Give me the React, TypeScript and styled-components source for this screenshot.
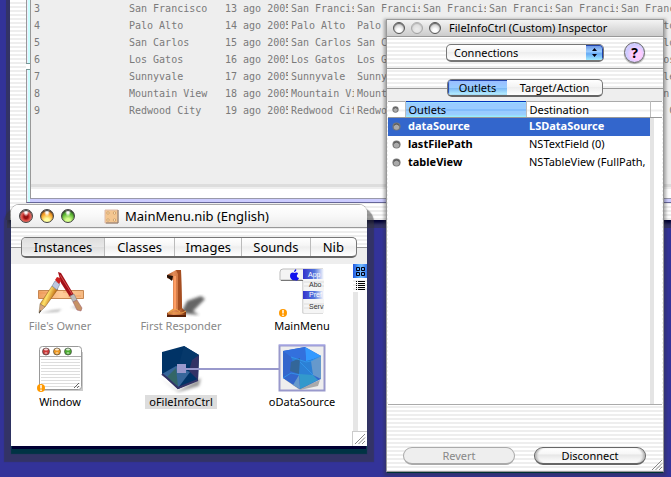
import React, { useState } from "react";
import styled, { createGlobalStyle, css } from "styled-components";

const GlobalStyle = createGlobalStyle`
  * { box-sizing: border-box; }
  html, body { margin: 0; background: #333399; overflow: hidden; }
  body, button, select { font-family: "Noto Sans", "Open Sans", sans-serif; }
  button, select { margin: 0; padding: 0; border: 0; background: none; color: #000; }
  table { border-collapse: collapse; border-spacing: 0; }
`;

const pinstripes = "repeating-linear-gradient(to bottom, #fff 0 2px, #eee 2px 4px)";

const Desktop = styled.main`
  position: relative;
  min-height: 100vh;
  overflow: hidden;
  background: #333399;
`;

/* ---------- Background document window ---------- */

const DocumentWindow = styled.section`
  position: absolute;
  top: 0;
  left: 10px;
  right: 0;
  padding: 0 0 17px 16px;
  background: ${pinstripes};
  box-shadow: -4px 0 0 #333366, 0 2px 3px 1px #000033, 0 5px 0 3px #333366;
`;

const DocumentPane = styled.div`
  position: relative;
  border-left: 1px solid #999;
  border-bottom: 1px solid #669;
  background: linear-gradient(to right, #eef 0 1px, #cff 1px 3px, #ccf 3px);
  padding: 0 0 3px 3px;

  &::before {
    content: "";
    position: absolute;
    left: -1px;
    top: 63px;
    width: 4px;
    height: 5px;
    border: 1px solid #799;
    border-width: 1px 0;
    background: #fff;
  }
`;

const DocumentBody = styled.div`
  min-height: 199px;
  border-left: 1px solid #999;
  border-bottom: 1px solid #99a;
  background: linear-gradient(to top, #fff 0 9px, #eee 9px 11px, #ddd 11px 14px, #eee 14px);
`;

const DocumentTable = styled.table`
  table-layout: fixed;
  width: 100%;
  font: 10px/17px "DejaVu Sans Mono", "Liberation Mono", monospace;
  color: #7a7a7a;

  td {
    padding: 0 3px 0 0;
    height: 17px;
  }
  td:first-child { padding-left: 3px; }
  td:last-child { padding-right: 0; }
`;

const ClippedText = styled.span`
  display: block;
  overflow: hidden;
  white-space: pre;
`;

const Col = styled.col<{ $w: number }>`
  width: ${(p) => p.$w}px;
`;

/* ---------- Shared window chrome ---------- */

const Panel = styled.section<{ $kind: "nib" | "inspector" }>`
  position: absolute;
  display: flex;
  flex-direction: column;
  ${(p) =>
    p.$kind === "nib"
      ? css`
          top: 205px;
          left: 11px;
          width: 356px;
          min-height: 241px;
          border-radius: 8px 8px 0 0;
          box-shadow: 0 -1px 0 #aaa, 0 4px 0 -1px #000033, 0 8px 1px 0 #003344, 0 9px 1px 7px rgba(51, 51, 51, 0.5);
        `
      : css`
          top: 20px;
          left: 387px;
          width: 276px;
          min-height: 451px;
          box-shadow: 0 0 0 1px #999, 0 2px 0 0 #003333, 0 2px 3px 3px rgba(51, 51, 51, 0.4);
        `}
  background: ${pinstripes};
`;

const NibTitleBar = styled.header`
  display: flex;
  align-items: center;
  height: 23px;
  padding: 0 8px;
  border-bottom: 1px solid #999;
  border-radius: 8px 8px 0 0;
  background: linear-gradient(#fff, #f8f8f8 50%, #ebebeb);
`;

const InspectorTitleBar = styled.header`
  display: flex;
  align-items: center;
  height: 17px;
  padding: 0 6px;
  border-bottom: 1px solid #999;
  background: linear-gradient(#f4f4f4, #ddd 55%, #ccc);
`;

const TrafficLights = styled.div<{ $gap: number }>`
  display: flex;
  gap: ${(p) => p.$gap}px;
`;

const Light = styled.button<{ $tone: "red" | "amber" | "green" }>`
  width: 14px;
  height: 14px;
  border: 1px solid #444;
  border-radius: 50%;
  background: ${(p) =>
    ({
      red: "radial-gradient(ellipse at 50% 10%, #fff 0 14%, transparent 36%), radial-gradient(circle at 50% 55%, #931010 0 22%, #d8453d 42%, #f6a69b 80%)",
      amber: "radial-gradient(ellipse at 50% 10%, #fff 0 14%, transparent 36%), radial-gradient(circle at 50% 90%, #ffffa0 0 18%, #f9a62c 55%, #c45d10 90%)",
      green: "radial-gradient(ellipse at 50% 10%, #fff 0 14%, transparent 36%), radial-gradient(circle at 50% 90%, #d6ff8e 0 18%, #62bc38 55%, #266d17 90%)",
    })[p.$tone]};
  box-shadow: inset 0 1px 1px #333;
`;

const SmallLight = styled.button<{ $dim?: boolean }>`
  width: 12px;
  height: 12px;
  border: 1px solid #555;
  border-radius: 50%;
  background: radial-gradient(circle at 50% 75%, #fff 0 20%, #d6d6d6 60%, #aaa);
  box-shadow: inset 0 1px 1px #666;
  opacity: ${(p) => (p.$dim ? 0.4 : 1)};
`;

const NibTitle = styled.h1`
  display: flex;
  align-items: center;
  gap: 6px;
  margin: 0 0 0 29px;
  font-size: 13px;
  font-weight: 400;
  line-height: 20px;
  white-space: nowrap;
`;

const InspectorTitle = styled.h1`
  margin: 0 0 0 8px;
  font-size: 11px;
  font-weight: 400;
  line-height: 16px;
  white-space: nowrap;
`;

/* ---------- Nib window ---------- */

const NibTabRow = styled.div`
  padding: 9px 10px 6px;
  background: linear-gradient(to bottom, transparent 0 19px, #999 19px 20px, #eee 20px);
`;

const NibTabs = styled.div`
  display: flex;
  height: 21px;
  border: 1px solid #777;
  border-bottom: 2px solid #666;
  border-radius: 5px;
  overflow: hidden;
  background: linear-gradient(#fff, #f6f6f6 40%, #eee 50%, #fff);
`;

const NibTab = styled.button<{ $grow: number; $active: boolean }>`
  flex: ${(p) => p.$grow} 1 0;
  font-size: 13px;
  line-height: 18px;
  background: ${(p) => (p.$active ? "linear-gradient(#ddd, #e8e8e8 50%, #ddd 52%, #f4f4f4)" : "transparent")};
  & + & { border-left: 1px solid #bbb; }
`;

const NibContent = styled.div`
  display: flex;
  flex: 1;
  background: #fff;
`;

const IconGrid = styled.div`
  display: grid;
  flex: 1;
  grid-template-columns: repeat(3, 98px);
  grid-auto-rows: 76px;
  column-gap: 23px;
`;

const IconCell = styled.figure`
  position: relative;
  display: flex;
  flex-direction: column;
  align-items: center;
  margin: 0;
  padding-top: 4px;

  svg { display: block; overflow: visible; }
`;

const IconLabel = styled.figcaption<{ $muted?: boolean; $selected?: boolean }>`
  margin-top: 1px;
  padding: 0 4px;
  font-size: 11px;
  line-height: 14px;
  white-space: nowrap;
  color: ${(p) => (p.$muted ? "#888" : "#000")};
  background: ${(p) => (p.$selected ? "#ddd" : "transparent")};
`;

const ConnectionLine = styled.span`
  position: absolute;
  z-index: 1;
  top: 28px;
  left: 49px;
  width: 98px;
  height: 2px;
  background: #9999cc;

  &::before {
    content: "";
    position: absolute;
    left: -4px;
    top: -4px;
    width: 9px;
    height: 9px;
    background: #9999cc;
  }
`;

const NibSide = styled.div`
  display: flex;
  flex-direction: column;
  width: 14px;
  background: linear-gradient(to right, #e6e6e6 0 5px, #fff 5px);
`;

const ViewButton = styled.button<{ $active: boolean }>`
  display: block;
  width: 14px;
  height: 14px;
  background: ${(p) => (p.$active ? "linear-gradient(to right, #2255dd, #55aaff 40%, #77bbff 60%, #3377ee)" : pinstripes)};
  svg { display: block; }
`;

const NibCorner = styled.div`
  width: 15px;
  height: 15px;
  margin: auto 0 0 -1px;
  border: 1px solid #ccc;
  border-width: 1px 0 0 1px;
  background: #fff;
  svg { display: block; }
`;

/* ---------- Inspector ---------- */

const InspectorToolbar = styled.div`
  display: flex;
  align-items: center;
  gap: 20px;
  height: 32px;
  padding: 0 18px 0 59px;
  border-bottom: 1px solid #999;
`;

const PopUp = styled.label`
  position: relative;
  display: flex;
  flex: 1;
  height: 18px;
  border: 1px solid #777;
  border-bottom-width: 2px;
  border-radius: 5px;
  overflow: hidden;
  background: linear-gradient(#fff, #f4f4f4 45%, #eee 50%, #fff);

  select {
    flex: 1;
    padding-left: 7px;
    appearance: none;
    font-size: 11px;
    line-height: 15px;
  }
  svg {
    position: absolute;
    top: 0;
    right: 0;
    pointer-events: none;
  }
`;

const HelpButton = styled.button`
  width: 21px;
  height: 21px;
  border: 1px solid #666;
  border-radius: 50%;
  font-size: 14px;
  font-weight: 700;
  line-height: 18px;
  background: radial-gradient(circle at 60% 60%, #ffccff 0 30%, #ccccff 60%, #e6ccff);
  box-shadow: 0 1px 1px #999;
`;

const InspectorTabRow = styled.div`
  display: flex;
  justify-content: center;
  padding: 10px 0 4px;
  background: linear-gradient(to bottom, transparent 0 19px, #999 19px 20px, #eee 20px);
`;

const InspectorTabs = styled.div`
  display: flex;
  width: 156px;
  height: 18px;
  border: 1px solid #777;
  border-bottom: 2px solid #666;
  border-radius: 5px;
  overflow: hidden;
  background: linear-gradient(#fff, #f4f4f4 45%, #eee 50%, #fff);
`;

const InspectorTab = styled.button<{ $grow: number; $active: boolean }>`
  flex: ${(p) => p.$grow} 1 0;
  font-size: 11px;
  line-height: 15px;
  ${(p) =>
    p.$active &&
    css`
      background: linear-gradient(#99bbff, #99ccff 50%, #77b4f4 52%, #bbf4ff);
      box-shadow: inset 0 1px 0 #2244aa, inset 1px 0 1px #2244aa;
    `}
`;

const TableFrame = styled.div`
  display: flex;
  flex-direction: column;
  flex: 1;
  margin: 0 1px;
  border-bottom: 1px solid #aaa;
  background: linear-gradient(to left, #fff 0 8px, #e4e4e4 8px 12px, #fff 12px);
`;

const OutletTable = styled.table`
  width: 100%;
  table-layout: fixed;
  font-size: 11px;

  th, td {
    padding: 0 0 0 3px;
    text-align: left;
    white-space: nowrap;
  }
  th {
    height: 16px;
    font-weight: 400;
    line-height: 13px;
    border-bottom: 1px solid #999;
    border-top: 1px solid #aaa;
    border-right: 1px solid #bbb;
    background: linear-gradient(#fff 0 7px, #eee 7px 9px, #fff 9px);
  }
  th:last-child { border-right: 0; }
  td:first-child, th:first-child { padding-left: 4px; }
  td { height: 18px; padding-bottom: 2px; line-height: 16px; }
  td:nth-child(2) { font-weight: 700; }
  td svg, th svg { display: block; }
`;

const SortedHeader = styled.th`
  && {
    border-top-color: #0033bb;
    background: linear-gradient(#99ccff 0 7px, #6aaef6 7px 8px, #99ccff 8px 12px, #99ffff);
  }
`;

const OutletRow = styled.tr<{ $selected: boolean }>`
  ${(p) =>
    p.$selected &&
    css`
      color: #fff;
      td:not(:last-child) { background: #3366cc; }
      td:nth-child(3) { font-weight: 700; }
    `}
`;

const InspectorFooter = styled.footer`
  position: relative;
  display: flex;
  gap: 19px;
  padding: 42px 17px 6px 16px;
`;

const PillButton = styled.button`
  flex: 1;
  height: 18px;
  border: 1px solid #666;
  border-bottom-width: 2px;
  border-radius: 9px;
  font-size: 11px;
  line-height: 15px;
  background: linear-gradient(#fff, #f6f6f6 40%, #e6e6e6 46%, #fff);
  box-shadow: inset 3px 0 2px -1px #bbb, inset -3px 0 2px -1px #bbb;
  &:disabled {
    color: #888;
    border-color: #aaa;
    background: #eee;
    box-shadow: none;
  }
`;

const FooterGrip = styled.span`
  position: absolute;
  right: 0;
  bottom: 0;
  svg { display: block; }
`;

/* ---------- Drawings ---------- */

const Grip = () => (
  <svg width="13" height="13" viewBox="0 0 13 13" stroke="#888" strokeWidth="1" aria-hidden="true">
    <path d="M2 12 12 2M5.500 12 12 5.500M9 12 12 9" />
  </svg>
);

const NibFileIcon = () => (
  <svg width="15" height="15" viewBox="0 0 15 15" aria-hidden="true">
    <path d="M1 1h13v13H1z" fill="#f4c690" stroke="#dba" />
    <path d="M14 1v13H2" fill="none" stroke="#876" />
    <g fill="#fff0c8" stroke="#c8935f" strokeWidth=".8">
      <circle cx="4" cy="4" r="1.200" /><circle cx="10.500" cy="4" r="1.200" />
      <circle cx="4" cy="11" r="1.200" /><circle cx="10.500" cy="11" r="1.200" />
    </g>
  </svg>
);

const Warning = ({ x, y }: { x: number; y: number }) => (
  <g>
    <circle cx={x} cy={y} r="4" fill="#ff9900" />
    <path d={`M${x} ${y - 3}v3.500M${x} ${y + 1.5}v1.500`} stroke="#fff" strokeWidth="1.500" />
  </g>
);

const OwnerIcon = () => (
  <svg width="48" height="50" viewBox="0 0 48 50" aria-hidden="true">
    <defs>
      <linearGradient id="wood" x1="0" x2="1"><stop offset="0" stopColor="#f0a060" /><stop offset=".5" stopColor="#ffcc99" /><stop offset="1" stopColor="#f5b880" /></linearGradient>
      <linearGradient id="pencil" x1="0" y1="0" x2="1" y2=".5"><stop offset=".25" stopColor="#c98318" /><stop offset=".5" stopColor="#ffe26b" /><stop offset=".8" stopColor="#c6761a" /></linearGradient>
      <filter id="soft"><feGaussianBlur stdDeviation="1" /></filter>
    </defs>
    <path d="M5 45 16 42 26 41 22 44zM34 39l10-1-2 3z" fill="#999" opacity=".6" filter="url(#soft)" />
    <path d="M2.500 22.500h45v8h-45z" fill="url(#wood)" stroke="#c68752" />
    <path d="M3 25h12M27 24h9M32 28h13" stroke="#ea8e4e" opacity=".6" />
    <path d="m22 4 3 1 13 22-4 2-9-14z" fill="#a31018" />
    <path d="m24 7 12 19" stroke="#d25050" />
    <path d="m34 28 4-2 3 6-4 2z" fill="#bbb" stroke="#777" strokeWidth=".5" />
    <path d="m37 34 4-2 5 8-1 3-4-1z" fill="#c69366" stroke="#956" strokeWidth=".5" />
    <path d="m16 18 6 3L9 39l-5-3z" fill="url(#pencil)" stroke="#875018" strokeWidth=".5" />
    <path d="m4 36 5 3-6 6z" fill="#d8a57c" stroke="#875" strokeWidth=".5" />
    <path d="m4 42 1 1-2 3z" fill="#222" />
    <path d="m16 18 3-5 5 3-3 6z" fill="#bcc7df" stroke="#678" strokeWidth=".5" />
    <path d="m19 12 2-3 3 1 1 3-2 3z" fill="#cc2020" />
  </svg>
);

const ResponderIcon = () => (
  <svg width="48" height="50" viewBox="0 0 48 50" aria-hidden="true">
    <defs>
      <linearGradient id="bronze" x1="0" x2="1"><stop offset="0" stopColor="#8e4119" /><stop offset=".35" stopColor="#e38c58" /><stop offset=".65" stopColor="#ca713e" /><stop offset="1" stopColor="#712e0c" /></linearGradient>
      <filter id="blur"><feGaussianBlur stdDeviation="1.500" /></filter>
    </defs>
    <path d="M24 45 30 33 44 28 48 31 36 43 42 47z" fill="#333" opacity=".75" filter="url(#blur)" />
    <path d="M10 7 19 2h5l1 38 4 4v4H10v-3l6-4V12L10 10z" fill="url(#bronze)" />
    <path d="m10 7 6 1-1 5-5-4z" fill="#221108" />
    <path d="m19 2 5 0 1 38-4 3V6z" fill="#a54e21" />
    <path d="M18 8v34" stroke="#ff9e64" strokeWidth="2" />
    <path d="M16 41 11 45h14l4-2M13 44l6-3 4 3" stroke="#efa34d" fill="none" />
    <path d="M10 47h19v2H10z" fill="#572007" />
  </svg>
);

const MenuIcon = () => (
  <svg width="48" height="50" viewBox="0 0 48 50" aria-hidden="true">
    <defs>
      <linearGradient id="fade" x1="0" x2="1"><stop offset="0" stopColor="#3333cc" /><stop offset=".55" stopColor="#5577dd" /><stop offset="1" stopColor="#fff" /></linearGradient>
    </defs>
    <path d="M5 1.500h40v10H25V46H24V13H5Q2 12 2 8V4Q2 2 5 1.500" fill="#f4f4f4" />
    <path d="M45 1H5Q2 1 2 4v8h22M25 12v33h20" fill="none" stroke="#bbb" />
    <path d="M3 12.500h22" stroke="#777" />
    <path d="M25.500 11.500H46V45H25.500z" fill="#f5f5f5" />
    <path d="M26 14h20M26 18h20M26 36h20M26 40h20" stroke="#ddd" />
    <path d="M25 1h21v10H25zM25 23h21v8H25z" fill="url(#fade)" />
    <path d="M16 4c0-2 2-3 2-3 1 2-1 3-2 3m1 1c2-1 3 0 3 1-2 1-1 4 1 4-1 3-3 3-4 2-2 1-5-1-5-4 0-4 3-4 5-3" fill="#1111ee" />
    <g fontFamily="Liberation Sans, sans-serif" fontSize="7">
      <text x="30" y="9" fill="#fff">App</text>
      <text x="31" y="19" fill="#333">Abo</text>
      <text x="31" y="29" fill="#fff">Pref</text>
      <text x="31" y="41" fill="#333">Serv</text>
    </g>
    <Warning x={5} y={45} />
  </svg>
);

const lights: [string, number][] = [["#cc3838", 10], ["#ee9922", 21], ["#4aac2e", 32]];

const WindowIcon = () => (
  <svg width="48" height="50" viewBox="0 0 48 50" aria-hidden="true">
    <path d="M5 46h41V8" fill="none" stroke="#ccc" strokeWidth="2" />
    <rect x="3.500" y="2.500" width="42" height="43" rx="3" fill="#fff" stroke="#999" />
    <path d="M4 12.500h41" stroke="#aaa" />
    <path d="M5 15.500h39M5 18.500h39M5 21.500h39M5 24.500h39M5 27.500h39M5 30.500h39M5 33.500h39M5 36.500h39M5 39.500h39M5 42.500h39" stroke="#ddd" />
    {lights.map(([color, x]) => (
      <g key={color}>
        <circle cx={x} cy="7.500" r="3.500" fill={color} stroke="#444" strokeWidth=".7" />
        <ellipse cx={x} cy="5.500" rx="2" ry="1" fill="#fff" opacity=".8" />
        <ellipse cx={x} cy="9" rx="1.500" ry="1" fill="#fff" opacity=".45" />
      </g>
    ))}
    <path d="m38 44 5-5M41 44l2-2" stroke="#666" />
    <Warning x={5} y={44} />
  </svg>
);

const DarkCube = () => (
  <svg width="48" height="50" viewBox="0 0 48 50" aria-hidden="true">
    <defs><filter id="cubeShadow"><feGaussianBlur stdDeviation="1.500" /></filter></defs>
    <path d="m3 34 18 13 23-13-2 8-21 6z" fill="#999" filter="url(#cubeShadow)" />
    <path d="M5 8 27 2l15 9-1 25-20 9L5 30z" fill="#003366" />
    <path d="m27 2 15 9-8 9-13 4z" fill="#06386a" />
    <path d="m35 16 7-5-1 25-9-9z" fill="#333366" />
    <path d="M5 30 19 22l14 6-12 16z" fill="#36669a" />
    <path d="m10 33 9-9 2 19z" fill="#336666" />
    <path d="m5 30 5 4 11 10 20-8" fill="none" stroke="#333366" strokeWidth="2" />
  </svg>
);

const BlueCube = () => (
  <svg width="48" height="50" viewBox="0 0 48 50" aria-hidden="true">
    <path d="M1.500 1.500h45v45h-45z" fill="#eee" stroke="#9999cc" strokeWidth="2" />
    <path d="M1 1h46" stroke="#aaaaee" />
    <path d="m6 35 16 9 20-8-2 6-18 4z" fill="#aaa" />
    <path d="M5 7 27 3l16 9v23l-21 10L5 34z" fill="#3366cc" />
    <path d="m27 3 16 9-15 6z" fill="#3399ff" />
    <path d="M5 7 27 3l1 15-15-5z" fill="#3370dd" />
    <path d="m13 13 15 4 12-3-6 18-13 1z" fill="#2c80d5" />
    <path d="m13 18 9-4-1 16-9-3z" fill="#336699" />
    <path d="m33 17 10-5v23l-8-4z" fill="#6699cc" />
    <path d="m21 30 14 1 5 5-18 9z" fill="#3399cc" />
    <path d="m5 34 8-5 8 2 1 14z" fill="#3366cc" />
    <path d="m15 41 6-10 1 14z" fill="#6699cc" />
    <path d="m13 13 15 5 5-1 10-5M22 18l13 13M5 34l8-5 9 2" fill="none" stroke="#3399ee" strokeWidth=".8" />
  </svg>
);

const Dot = ({ size }: { size: number }) => (
  <svg width={size} height={size} viewBox="0 0 10 10" aria-hidden="true">
    <circle cx="5" cy="5" r="4.500" fill="#777" />
    <circle cx="5" cy="5.500" r="3" fill="#aaa" />
    <path d="M2 4Q5 .5 8 4" stroke="#444" fill="none" />
  </svg>
);

const PopUpArrows = () => (
  <svg width="17" height="16" viewBox="0 0 17 16" aria-hidden="true">
    <defs><linearGradient id="aqua" x1="0" x2="0" y1="0" y2="1"><stop offset="0" stopColor="#668ee0" /><stop offset=".4" stopColor="#99ccff" /><stop offset=".55" stopColor="#66aaf4" /><stop offset="1" stopColor="#aaf4ff" /></linearGradient></defs>
    <path d="M0 0h17v16H0z" fill="url(#aqua)" />
    <path d="M0 .5h14q2.500 0 2.500 3V15" fill="none" stroke="#2244aa" />
    <path d="m8.500 3 2.500 3h-5zM8.500 12l2.500-3h-5z" fill="#001" />
  </svg>
);

const GridGlyph = () => (
  <svg width="14" height="14" viewBox="0 0 14 14" fill="none" stroke="#001" aria-hidden="true">
    <path d="M3.500 3.500h3v3h-3zM8.500 3.500h3v3h-3zM3.500 8.500h3v3h-3zM8.500 8.500h3v3h-3z" />
  </svg>
);

const ListGlyph = () => (
  <svg width="14" height="14" viewBox="0 0 14 14" stroke="#000" aria-hidden="true">
    <path d="M3 3.500h1M3 5.500h1M3 7.500h1M3 9.500h1M3 11.500h1M5 3.500h7M5 5.500h7M5 7.500h7M5 9.500h7M5 11.500h7" />
  </svg>
);

/* ---------- Data ---------- */

const records = [
  [3, "San Francisco", "13 ago 2005"],
  [4, "Palo Alto", "14 ago 2005"],
  [5, "San Carlos", "15 ago 2005"],
  [6, "Los Gatos", "16 ago 2005"],
  [7, "Sunnyvale", "17 ago 2005"],
  [8, "Mountain View", "18 ago 2005"],
  [9, "Redwood City", "19 ago 2005"],
] as const;

const cityColumns = [0, 1, 2, 3, 4, 5];

const nibTabs: [string, number][] = [["Instances", 83], ["Classes", 70], ["Images", 67], ["Sounds", 68], ["Nib", 46]];

const inspectorTabs: [string, number][] = [["Outlets", 59], ["Target/Action", 95]];

const outlets = [
  ["dataSource", "LSDataSource"],
  ["lastFilePath", "NSTextField (0)"],
  ["tableView", "NSTableView (FullPath,"],
];

export default function App() {
  const [nibTab, setNibTab] = useState("Instances");
  const [inspectorTab, setInspectorTab] = useState("Outlets");
  const [view, setView] = useState("icons");
  const [selected, setSelected] = useState("dataSource");

  return (
    <Desktop>
      <GlobalStyle />
      <DocumentWindow aria-label="Files">
        <DocumentPane>
          <DocumentBody>
            <DocumentTable>
              <colgroup>
                <Col $w={98} /><Col $w={96} /><Col $w={66} />
                {cityColumns.slice(1).map((i) => <Col key={i} $w={66} />)}
                <col />
              </colgroup>
              <tbody>
                {records.map(([id, city, date]) => (
                  <tr key={id}>
                    <td>{id}</td>
                    <td><ClippedText>{city}</ClippedText></td>
                    <td><ClippedText>{date}</ClippedText></td>
                    {cityColumns.map((i) => <td key={i}><ClippedText>{city}</ClippedText></td>)}
                  </tr>
                ))}
              </tbody>
            </DocumentTable>
          </DocumentBody>
        </DocumentPane>
      </DocumentWindow>

      <Panel $kind="nib" aria-label="MainMenu.nib">
        <NibTitleBar>
          <TrafficLights $gap={7}>
            <Light $tone="red" aria-label="Close" />
            <Light $tone="amber" aria-label="Minimize" />
            <Light $tone="green" aria-label="Zoom" />
          </TrafficLights>
          <NibTitle><NibFileIcon />MainMenu.nib (English)</NibTitle>
        </NibTitleBar>
        <NibTabRow>
          <NibTabs role="tablist">
            {nibTabs.map(([name, grow]) => (
              <NibTab key={name} role="tab" aria-selected={nibTab === name} $grow={grow} $active={nibTab === name} onClick={() => setNibTab(name)}>
                {name}
              </NibTab>
            ))}
          </NibTabs>
        </NibTabRow>
        <NibContent>
          <IconGrid>
            <IconCell><OwnerIcon /><IconLabel $muted>File's Owner</IconLabel></IconCell>
            <IconCell><ResponderIcon /><IconLabel $muted>First Responder</IconLabel></IconCell>
            <IconCell><MenuIcon /><IconLabel>MainMenu</IconLabel></IconCell>
            <IconCell><WindowIcon /><IconLabel>Window</IconLabel></IconCell>
            <IconCell><DarkCube /><ConnectionLine /><IconLabel $selected>oFileInfoCtrl</IconLabel></IconCell>
            <IconCell><BlueCube /><IconLabel>oDataSource</IconLabel></IconCell>
          </IconGrid>
          <NibSide>
            <ViewButton $active={view === "icons"} aria-label="Icon view" onClick={() => setView("icons")}><GridGlyph /></ViewButton>
            <ViewButton $active={view === "list"} aria-label="List view" onClick={() => setView("list")}><ListGlyph /></ViewButton>
            <NibCorner><Grip /></NibCorner>
          </NibSide>
        </NibContent>
      </Panel>

      <Panel $kind="inspector" aria-label="Inspector">
        <InspectorTitleBar>
          <TrafficLights $gap={6}>
            <SmallLight aria-label="Close" />
            <SmallLight $dim aria-label="Minimize" />
            <SmallLight aria-label="Zoom" />
          </TrafficLights>
          <InspectorTitle>FileInfoCtrl (Custom) Inspector</InspectorTitle>
        </InspectorTitleBar>
        <InspectorToolbar>
          <PopUp>
            <select aria-label="Inspector section" defaultValue="Connections">
              <option>Connections</option>
            </select>
            <PopUpArrows />
          </PopUp>
          <HelpButton aria-label="Help">?</HelpButton>
        </InspectorToolbar>
        <InspectorTabRow>
          <InspectorTabs role="tablist">
            {inspectorTabs.map(([name, grow]) => (
              <InspectorTab key={name} role="tab" aria-selected={inspectorTab === name} $grow={grow} $active={inspectorTab === name} onClick={() => setInspectorTab(name)}>
                {name}
              </InspectorTab>
            ))}
          </InspectorTabs>
        </InspectorTabRow>
        <TableFrame>
          <OutletTable>
            <colgroup><Col $w={17} /><Col $w={121} /><col /><Col $w={12} /></colgroup>
            <thead>
              <tr><th><Dot size={7} /></th><SortedHeader>Outlets</SortedHeader><th>Destination</th><th /></tr>
            </thead>
            <tbody>
              {outlets.map(([name, target]) => (
                <OutletRow key={name} $selected={selected === name} onClick={() => setSelected(name)}>
                  <td><Dot size={9} /></td><td>{name}</td><td>{target}</td><td />
                </OutletRow>
              ))}
            </tbody>
          </OutletTable>
        </TableFrame>
        <InspectorFooter>
          <PillButton disabled>Revert</PillButton>
          <PillButton>Disconnect</PillButton>
          <FooterGrip><Grip /></FooterGrip>
        </InspectorFooter>
      </Panel>
    </Desktop>
  );
}
